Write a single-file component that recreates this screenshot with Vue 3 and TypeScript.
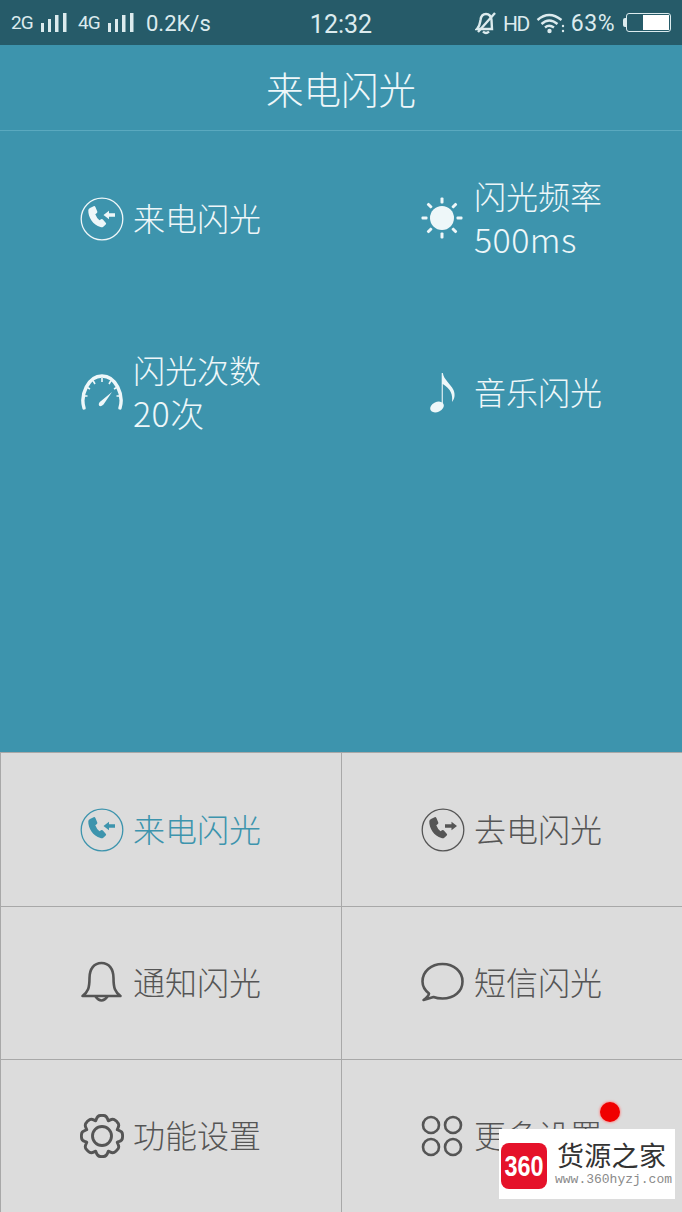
<script setup lang="ts">
type Tile = { icon: string; label: string; value?: string; active?: boolean };

const panel: Tile[] = [
  { icon: "call-in", label: "来电闪光" },
  { icon: "sun", label: "闪光频率", value: "500ms" },
  { icon: "gauge", label: "闪光次数", value: "20次" },
  { icon: "note", label: "音乐闪光" },
];

const menu: Tile[] = [
  { icon: "call-in", label: "来电闪光", active: true },
  { icon: "call-out", label: "去电闪光" },
  { icon: "bell", label: "通知闪光" },
  { icon: "chat", label: "短信闪光" },
  { icon: "gear", label: "功能设置" },
  { icon: "apps", label: "更多设置" },
];

const handset =
  "M10 11 l3.600-1.800 q1.200-.4 1.800.7 l1.900 4.600 q.3 1.100-.7 1.800 l-1.300 1 q1.300 3.600 4.200 6 l1.500-1 q1.100-.6 1.900.2 l3 3.400 q.6.900-.2 1.700 l-2.400 2.200 q-1.200 .9-2.800.3 C13 28 8 20 8.300 13.200 q0-1.500 1.700-2.200z";

const rays = [0, 45, 90, 135, 180, 225, 270, 315];

// 8 rounded teeth round the centre of the 44 box
function gearPath(): string {
  const pt = (r: number, a: number) =>
    `${(22 + r * Math.cos(a)).toFixed(2)} ${(22 + r * Math.sin(a)).toFixed(2)}`;
  const step = Math.PI / 4;
  let d = "";
  for (let i = 0; i < 8; i++) {
    const a = i * step - Math.PI / 2;
    const start = pt(16.5, a - step * 0.5);
    if (i === 0) d += `M${start} `;
    d += `C${pt(18, a - step * 0.38)} ${pt(21.5, a - step * 0.32)} ${pt(20.5, a - step * 0.08)} `;
    d += `Q${pt(20.8, a)} ${pt(20.5, a + step * 0.08)} `;
    d += `C${pt(21.5, a + step * 0.32)} ${pt(18, a + step * 0.38)} ${pt(16.5, a + step * 0.5)} `;
  }
  return d + "Z";
}
const gear = gearPath();
</script>

<template>
  <div class="screen">
    <div class="status-bar">
      <div class="status-left">
        <span class="net">2G</span>
        <svg class="signal" width="27" height="21" viewBox="0 0 27 21">
          <rect x="1" y="11" width="3" height="9" />
          <rect x="8" y="7" width="3" height="13" />
          <rect x="15" y="3" width="3.500" height="17" />
          <rect x="23" y="1" width="3.500" height="19" />
        </svg>
        <span class="net net-second">4G</span>
        <svg class="signal" width="27" height="21" viewBox="0 0 27 21">
          <rect x="1" y="11" width="3" height="9" />
          <rect x="8" y="7" width="3" height="13" />
          <rect x="15" y="3" width="3.500" height="17" />
          <rect x="23" y="1" width="3.500" height="19" />
        </svg>
        <span class="speed">0.2K/s</span>
      </div>
      <div class="clock">12:32</div>
      <div class="status-right">
        <svg width="22" height="24" viewBox="0 0 22 24" fill="none" stroke="#dcebee" stroke-width="2.400">
          <path d="M2 18 C5 15 5 12 5.500 9 C6 5 8 3 11 3 C14 3 16 5 16.500 9 L17 18 Z" />
          <path d="M8 20.500 Q11 23.500 14 20.500" />
          <path d="M3 21 L20 2" />
        </svg>
        <span class="hd">HD</span>
        <svg width="29" height="22" viewBox="0 0 29 22" fill="none" stroke="#dcebee" stroke-width="2.400">
          <path d="M1.500 8 Q13 -2 25.500 8" />
          <path d="M5.500 12 Q13 5 21.500 12" />
          <path d="M9 15.500 Q13 12 18 15.500" />
          <circle cx="13.500" cy="19" r="2.200" fill="#dcebee" stroke="none" />
          <circle cx="27" cy="14" r="1.200" fill="#dcebee" stroke="none" />
          <circle cx="27" cy="19" r="1.200" fill="#dcebee" stroke="none" />
        </svg>
        <span class="percent">63%</span>
        <div class="battery">
          <span class="battery-cap"></span>
          <div class="battery-body"><span class="battery-level"></span></div>
        </div>
      </div>
    </div>

    <header class="title-bar">来电闪光</header>

    <section class="panel">
      <div v-for="item in panel" :key="item.label" class="tile">
        <svg class="icon" width="44" height="44" viewBox="0 0 44 44">
          <template v-if="item.icon === 'call-in'">
            <circle cx="22" cy="22" r="20.800" fill="none" stroke="currentColor" stroke-width="1.300" />
            <path :d="handset" fill="currentColor" />
            <path d="M23.500 18 L29 13.800 V16.300 H35 V19.700 H29 V22.200 Z" fill="currentColor" />
          </template>
          <template v-else-if="item.icon === 'sun'">
            <circle cx="21" cy="21" r="12" fill="currentColor" />
            <rect
              v-for="a in rays"
              :key="a"
              x="19.500"
              y="0.500"
              width="3"
              height="6"
              rx="1"
              fill="currentColor"
              :transform="`rotate(${a} 21 21)`"
            />
          </template>
          <template v-else-if="item.icon === 'gauge'">
            <path d="M4 37 C0 24 8 5 22 5 C36 5 44 24 40 37" fill="none" stroke="currentColor" stroke-width="3.400" stroke-linecap="round" />
            <path d="M22 7 V11 M13 9.500 L15 13 M31 9.500 L29 13 M6.500 16 L10 18 M37.500 16 L34 18 M3.500 25 H7.500 M40.500 25 H36.500" stroke="currentColor" stroke-width="1.600" />
            <path d="M32 21 L23.500 33.500 Q20.500 36.500 19 34.500 Q18 32 21 30 Z" fill="currentColor" />
          </template>
          <template v-else-if="item.icon === 'note'">
            <ellipse cx="16" cy="36" rx="7.200" ry="5" transform="rotate(-25 16 36)" fill="currentColor" />
            <path d="M20.700 36 V2 H21.800 C23 9 29 12 32.500 19 C34.500 24 33.500 28 31 31 C32 24 30 18 21.800 13 V36 Z" fill="currentColor" />
          </template>
        </svg>
        <div class="tile-text">
          <div>{{ item.label }}</div>
          <div v-if="item.value" class="tile-value">{{ item.value }}</div>
        </div>
      </div>
    </section>

    <section class="menu">
      <div v-for="item in menu" :key="item.label" class="cell" :class="{ active: item.active }">
        <svg class="icon" width="44" height="44" viewBox="0 0 44 44">
          <template v-if="item.icon === 'call-in'">
            <circle cx="22" cy="22" r="20.800" fill="none" stroke="currentColor" stroke-width="1.300" />
            <path :d="handset" fill="currentColor" />
            <path d="M23.500 18 L29 13.800 V16.300 H35 V19.700 H29 V22.200 Z" fill="currentColor" />
          </template>
          <template v-else-if="item.icon === 'call-out'">
            <circle cx="22" cy="22" r="20.800" fill="none" stroke="currentColor" stroke-width="1.300" />
            <path :d="handset" fill="currentColor" />
            <path d="M36 18 L30.500 13.800 V16.300 H24 V19.700 H30.500 V22.200 Z" fill="currentColor" />
          </template>
          <template v-else-if="item.icon === 'bell'">
            <path d="M2.500 35 C8 31 9.500 27 9.500 17 C9.500 8 14 2 21.500 2 C29 2 33.500 8 33.500 17 C33.500 27 35 31 40.500 35 Z" fill="none" stroke="currentColor" stroke-width="2.600" stroke-linejoin="round" />
            <path d="M15.500 35.500 Q21.500 43.500 27.500 35.500" fill="none" stroke="currentColor" stroke-width="2.600" />
          </template>
          <template v-else-if="item.icon === 'chat'">
            <path d="M8 32.500 C3.500 29 1.500 25 1.500 20.500 C1.500 10.500 10 3 21.500 3 C33 3 41.500 10.500 41.500 20.500 C41.500 30.500 33 37.500 21.500 37.500 C18 37.500 15 37 12.500 36 L2.500 39 C5.500 37 7.500 35 8 32.500 Z" fill="none" stroke="currentColor" stroke-width="2.600" stroke-linejoin="round" />
          </template>
          <template v-else-if="item.icon === 'gear'">
            <path :d="gear" fill="none" stroke="currentColor" stroke-width="2.900" stroke-linejoin="round" />
            <circle cx="22" cy="22" r="9.500" fill="none" stroke="currentColor" stroke-width="2.900" />
          </template>
          <template v-else-if="item.icon === 'apps'">
            <g fill="none" stroke="currentColor" stroke-width="2.600">
              <circle cx="10" cy="11" r="8" />
              <circle cx="32" cy="11" r="8" />
              <circle cx="10" cy="33" r="8" />
              <circle cx="32" cy="33" r="8" />
            </g>
          </template>
        </svg>
        <span class="cell-label">{{ item.label }}</span>
      </div>
    </section>

    <span class="red-dot"></span>
    <div class="watermark">
      <div class="wm-logo"><span class="wm-digits">360</span></div>
      <div class="wm-text">
        <div class="wm-name">货源之家</div>
        <div class="wm-url">www.360hyzj.com</div>
      </div>
    </div>
  </div>
</template>

<style scoped>
.screen {
  position: relative;
  width: 682px;
  height: 1212px;
  display: flex;
  flex-direction: column;
  overflow: hidden;
  background: #3d94ad;
  font-family: "Noto Sans CJK SC", "Liberation Sans", sans-serif;
  font-weight: 300;
}

.status-bar {
  height: 45px;
  flex-shrink: 0;
  display: grid;
  grid-template-columns: 1fr auto 1fr;
  align-items: center;
  background: #265b69;
  color: #dcebee;
  font-family: Roboto, "Liberation Sans", sans-serif;
  font-weight: 400;
}

.status-left {
  display: flex;
  align-items: center;
  padding-left: 11px;
}

.net {
  font-size: 19px;
  letter-spacing: -1px;
  width: 29px;
  margin-top: -1px;
}

.net-second {
  margin-left: 11px;
}

.signal {
  fill: #dcebee;
}

.speed {
  font-size: 22px;
  margin-left: 12px;
  margin-top: 2px;
}

.clock {
  font-size: 25px;
  margin-top: 3px;
}

.status-right {
  display: flex;
  align-items: center;
  justify-content: flex-end;
  padding-right: 11px;
}

.hd {
  font-size: 21px;
  margin-left: 6px;
  margin-top: 2px;
  letter-spacing: -1.500px;
}

.status-right svg:nth-of-type(2) {
  margin-left: 7px;
}

.percent {
  font-size: 23px;
  margin-left: 6px;
  margin-top: 2px;
  letter-spacing: 0.500px;
}

.battery {
  display: flex;
  align-items: center;
  margin-left: 8px;
}

.battery-cap {
  width: 3px;
  height: 9px;
  background: #dcebee;
  border-radius: 2px 0 0 2px;
}

.battery-body {
  width: 45px;
  height: 19px;
  box-sizing: border-box;
  border: 1.500px solid #dcebee;
  border-radius: 3px;
  padding: 1px;
  display: flex;
  justify-content: flex-end;
}

.battery-level {
  width: 26px;
  background: #fff;
}

.title-bar {
  height: 85px;
  flex-shrink: 0;
  display: flex;
  align-items: center;
  justify-content: center;
  border-bottom: 1px solid #5aa9bf;
  color: #eef7f9;
  font-size: 37.500px;
}

.panel {
  flex: 1;
  display: grid;
  grid-template-columns: 341px 341px;
  grid-auto-rows: 174px;
  padding-top: 1px;
  color: #eef7f9;
}

.tile {
  display: flex;
  align-items: center;
  gap: 9px;
  padding-left: 80px;
}

.tile-text {
  font-size: 32px;
  line-height: 44px;
  margin-top: -4px;
}

.tile-value {
  font-size: 34px;
  letter-spacing: 0.400px;
}

.icon {
  flex-shrink: 0;
}

.menu {
  flex-shrink: 0;
  display: grid;
  grid-template-columns: 341px 341px;
  grid-template-rows: 154px 153px 153px;
  background: #dcdcdc;
  color: #555;
}

.cell {
  display: flex;
  align-items: center;
  gap: 9px;
  padding-left: 79px;
  border-top: 1px solid #a8a8a8;
  border-left: 1px solid #a8a8a8;
}

.cell.active {
  color: #3d94ad;
}

.cell-label {
  font-size: 32px;
  line-height: 44px;
  margin-top: -4px;
}

.red-dot {
  position: absolute;
  left: 600px;
  top: 1102px;
  width: 20px;
  height: 20px;
  border-radius: 50%;
  background: #f00000;
  box-shadow: 0 0 2px 1px #f4a0a0;
}

.watermark {
  position: absolute;
  left: 499px;
  top: 1129px;
  width: 176px;
  height: 70px;
  background: #fff;
  display: flex;
  align-items: center;
  padding-left: 2px;
  box-sizing: border-box;
}

.wm-logo {
  width: 46px;
  height: 46px;
  margin-top: 3px;
  border-radius: 8px;
  background: #e5122a;
  color: #fff;
  display: flex;
  align-items: center;
  justify-content: center;
  font-family: "Liberation Sans", sans-serif;
  font-weight: 700;
  font-size: 30px;
}

.wm-digits {
  display: inline-block;
  transform: scaleX(0.78);
}

.wm-text {
  margin-left: 10px;
}

.wm-name {
  font-size: 27px;
  line-height: 32px;
  letter-spacing: 0.300px;
  color: #333;
  font-weight: 400;
  font-family: "Noto Sans CJK SC", sans-serif;
}

.wm-url {
  font-family: "Liberation Mono", monospace;
  font-size: 13px;
  line-height: 18px;
  margin-left: -2px;
  color: #8a8a8a;
  font-weight: 400;
  white-space: nowrap;
}
</style>
